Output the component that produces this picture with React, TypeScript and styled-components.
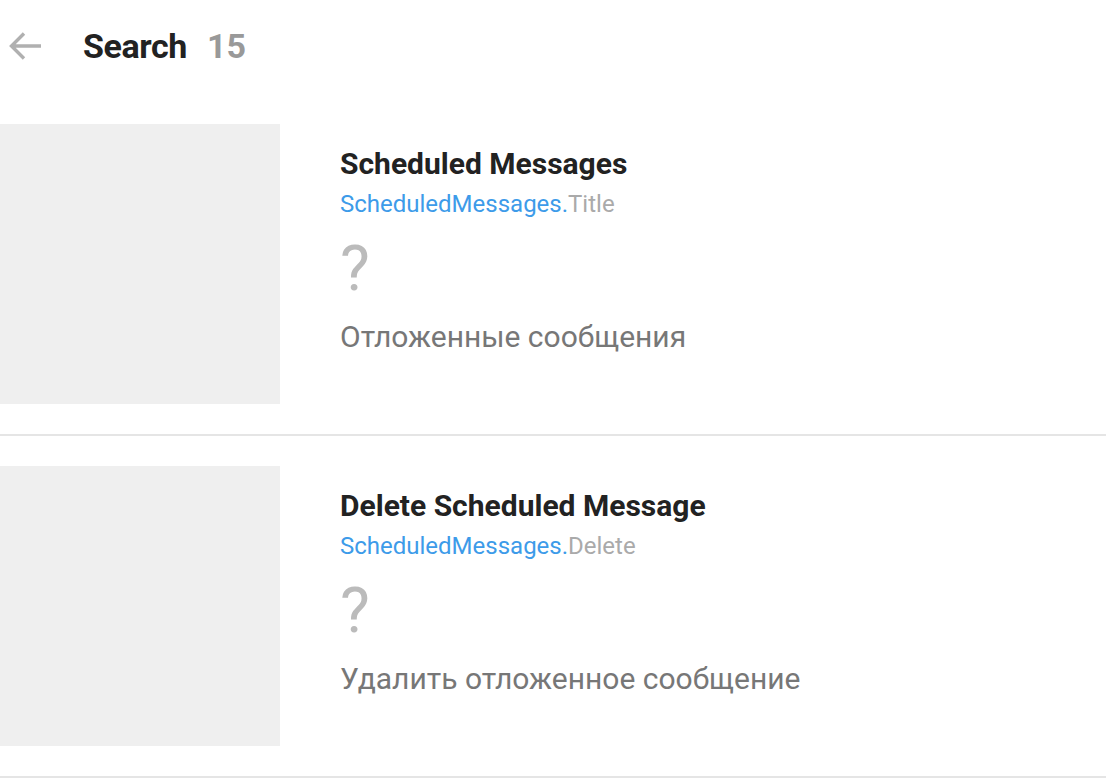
import styled, { createGlobalStyle } from "styled-components"

const Global = createGlobalStyle`
  html, body {
    margin: 0;
    padding: 0;
    background: #fff;
  }
  body {
    font-family: Roboto, "Noto Sans", "Liberation Sans", sans-serif;
    color: #222;
  }
`

const Page = styled.div`
  width: 1106px;
  height: 778px;
  overflow: hidden;
`

const Header = styled.div`
  display: flex;
  align-items: center;
  height: 94px;
  padding-left: 9px;
  box-sizing: border-box;
  padding-bottom: 2px;
`

const BackButton = styled.button`
  display: flex;
  align-items: center;
  justify-content: center;
  width: 33px;
  height: 30px;
  padding: 0;
  border: none;
  background: none;
  margin-right: 41px;
  color: #b0b0b0;
`

const Title = styled.h1`
  margin: 0;
  font-size: 34px;
  font-weight: 700;
  letter-spacing: -0.4px;
  color: #222;
`

const Count = styled.span`
  margin-left: 20px;
  font-size: 34px;
  font-weight: 700;
  color: #999;
`

const Row = styled.div`
  display: flex;
  padding: 30px 0;
  border-bottom: 2px solid #e5e5e5;
`

const Preview = styled.div`
  width: 280px;
  height: 280px;
  flex-shrink: 0;
  background: #efefef;
`

const Body = styled.div`
  display: flex;
  flex-direction: column;
  padding-left: 60px;
  padding-top: 22px;
`

const Name = styled.div`
  font-size: 30px;
  font-weight: 700;
  color: #222;
  line-height: 36px;
`

const Key = styled.div`
  margin-top: 8px;
  font-size: 24px;
  line-height: 28px;
  color: #aaa;
`

const KeyScope = styled.span`
  color: #3d9be9;
`

const Missing = styled.div`
  margin-top: 19px;
  font-size: 63px;
  line-height: 63px;
  color: #bbb;
`

const Translation = styled.div`
  margin-top: 19px;
  font-size: 30px;
  line-height: 36px;
  color: #777;
`

type Item = {
  name: string
  scope: string
  key: string
  translation: string
}

const items: Item[] = [
  {
    name: "Scheduled Messages",
    scope: "ScheduledMessages",
    key: "Title",
    translation: "Отложенные сообщения",
  },
  {
    name: "Delete Scheduled Message",
    scope: "ScheduledMessages",
    key: "Delete",
    translation: "Удалить отложенное сообщение",
  },
]

function ArrowBack() {
  return (
    <svg width="33" height="30" viewBox="0 0 33 30" fill="none" stroke="currentColor" strokeWidth="3.4">
      <path d="M32 15H3M15 2.5L2.5 15L15 27.5" />
    </svg>
  )
}

export default function App() {
  return (
    <Page>
      <Global />
      <Header>
        <BackButton>
          <ArrowBack />
        </BackButton>
        <Title>Search</Title>
        <Count>15</Count>
      </Header>
      {items.map((item) => (
        <Row key={item.key}>
          <Preview />
          <Body>
            <Name>{item.name}</Name>
            <Key>
              <KeyScope>{item.scope}.</KeyScope>
              {item.key}
            </Key>
            <Missing>?</Missing>
            <Translation>{item.translation}</Translation>
          </Body>
        </Row>
      ))}
    </Page>
  )
}
